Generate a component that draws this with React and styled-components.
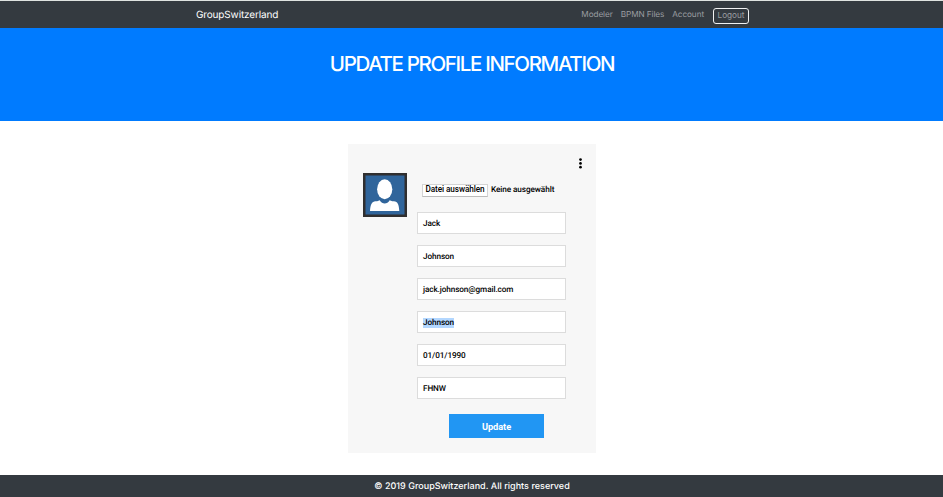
import React from "react";
import styled, { createGlobalStyle } from "styled-components";

const GlobalStyle = createGlobalStyle`
  * { box-sizing: border-box; }
  body { margin: 0; background: #fff; overflow: hidden; }
  button, input { font: inherit; }
`;

const Page = styled.div`
  display: flex;
  flex-direction: column;
  height: 497px;
  font-family: Inter, "Liberation Sans", sans-serif;
  text-rendering: geometricPrecision;
`;

const Navbar = styled.nav`
  display: flex;
  flex: none;
  justify-content: space-between;
  align-items: flex-start;
  height: 28px;
  padding: 7px 194px 0 196px;
  border-top: 1px solid #dfe3e1;
  background: #343a40;
  white-space: nowrap;
`;

const Brand = styled.a`
  color: #fff;
  font-size: 10px;
  line-height: 14px;
  letter-spacing: -0.15px;
`;

const NavLinks = styled.div`
  display: flex;
  align-items: flex-start;
  gap: 8px;
`;

const NavLink = styled.a`
  color: #9a9da0;
  font-size: 8.2px;
  line-height: 13px;
  letter-spacing: -0.08px;
`;

const LogoutButton = styled.button`
  width: 36px;
  height: 16px;
  margin-left: 1px;
  padding: 0 0 2px;
  border: 1px solid #f0f1f2;
  border-radius: 3px;
  background: transparent;
  color: #9a9da0;
  font-size: 8.2px;
  line-height: 12px;
`;

const Hero = styled.header`
  flex: none;
  height: 93px;
  padding-top: 23px;
  background: #007bff;
  text-align: center;
`;

const Title = styled.h1`
  margin: 0;
  padding-left: 1px;
  color: #fff;
  font-size: 20.5px;
  font-weight: 550;
  line-height: 26px;
  letter-spacing: -1.35px;
`;

const Main = styled.main`
  display: flex;
  flex: none;
  height: 354px;
  padding: 23px 0 0 348px;
`;

const Card = styled.section`
  width: 248px;
  height: 309px;
  padding: 14px 13px 0 15px;
  background: #f7f7f7;
  font-family: Roboto, "Liberation Sans", sans-serif;
`;

const CardHeader = styled.div`
  display: flex;
  justify-content: flex-end;
  height: 15px;
`;

const ProfileForm = styled.form`
  display: grid;
  grid-template-columns: 44px 149px;
  column-gap: 10px;
`;

const Fields = styled.div`
  display: flex;
  flex-direction: column;
`;

const FilePicker = styled.div`
  display: flex;
  align-items: center;
  gap: 3px;
  height: 14px;
  margin: 10px 0 15px 5px;
  color: #000;
  font-size: 8.2px;
  font-weight: 500;
  line-height: 10px;
  letter-spacing: -0.08px;
  white-space: nowrap;
`;

const FileButton = styled.button`
  width: 66px;
  height: 13px;
  padding: 0 0 2px;
  border: 1px solid #d4d4d4;
  border-bottom-color: #bcbcbc;
  background: #fff;
  color: #000;
  line-height: 9px;
  letter-spacing: -0.08px;
`;

const FileStatus = styled.span`
  padding-bottom: 1px;
`;

const FieldList = styled.div`
  display: grid;
  grid-template-rows: 33px 33px 33px 33px 33px 23px;
`;

const Field = styled.div`
  display: flex;
  align-items: center;
  height: 22px;
  padding: 1px 0 0 5px;
  border: 1px solid #dcdcdc;
  background: #fff;
  color: #000;
  font-size: 8.2px;
  font-weight: 500;
  letter-spacing: -0.1px;
`;

const FieldText = styled.span`
  background: ${(p) => (p.$selected ? "#b3d7ff" : "transparent")};
  line-height: 10px;
`;

const UpdateButton = styled.button`
  width: 95px;
  height: 24px;
  margin: 14px 0 0 32px;
  padding: 0;
  border: 0;
  background: #2196f3;
  color: #fff;
  font-size: 9.2px;
  font-weight: 700;
  letter-spacing: -0.05px;
`;

const Footer = styled.footer`
  flex: none;
  height: 22px;
  padding-left: 1px;
  background: #343a40;
  color: #fff;
  font-size: 9px;
  font-weight: 500;
  line-height: 24px;
  letter-spacing: 0.02px;
  text-align: center;
`;

const values = [
  { text: "Jack" },
  { text: "Johnson" },
  { text: "jack.johnson@gmail.com" },
  { text: "Johnson", selected: true },
  { text: "01/01/1990" },
  { text: "FHNW" },
];

function Avatar() {
  return (
    <svg width="44" height="44" viewBox="0 0 44 44">
      <rect width="44" height="44" fill="#302f2f" />
      <rect x="2.5" y="2.5" width="39" height="39" fill="#30659b" />
      <ellipse cx="21.7" cy="16.2" rx="7.6" ry="10" fill="#fff" />
      <path
        d="M7 38c.4-5.200 1.400-8.700 4.200-9.400 2-.5 4-.4 5.500-1.400 1.400 2.200 3.100 3.300 5 3.300s3.700-1.100 5-3.300c1.600 1 3.600.9 5.600 1.400 2.800.7 3.600 4.200 4 9.400z"
        fill="#fff"
      />
    </svg>
  );
}

function MoreIcon() {
  return (
    <svg width="5" height="11" viewBox="0 0 5 11">
      <circle cx="2.500" cy="1.600" r="1.350" />
      <circle cx="2.500" cy="5.400" r="1.350" />
      <circle cx="2.500" cy="9.200" r="1.350" />
    </svg>
  );
}

export default function App() {
  return (
    <Page>
      <GlobalStyle />
      <Navbar>
        <Brand>GroupSwitzerland</Brand>
        <NavLinks>
          <NavLink>Modeler</NavLink>
          <NavLink>BPMN Files</NavLink>
          <NavLink>Account</NavLink>
          <LogoutButton>Logout</LogoutButton>
        </NavLinks>
      </Navbar>
      <Hero>
        <Title>UPDATE PROFILE INFORMATION</Title>
      </Hero>
      <Main>
        <Card>
          <CardHeader>
            <MoreIcon />
          </CardHeader>
          <ProfileForm>
            <Avatar />
            <Fields>
              <FilePicker>
                <FileButton type="button">Datei auswählen</FileButton>
                <FileStatus>Keine ausgewählt</FileStatus>
              </FilePicker>
              <FieldList>
                {values.map((v, i) => (
                  <Field key={i}>
                    <FieldText $selected={v.selected}>{v.text}</FieldText>
                  </Field>
                ))}
              </FieldList>
              <UpdateButton type="button">Update</UpdateButton>
            </Fields>
          </ProfileForm>
        </Card>
      </Main>
      <Footer>© 2019 GroupSwitzerland. All rights reserved</Footer>
    </Page>
  );
}
